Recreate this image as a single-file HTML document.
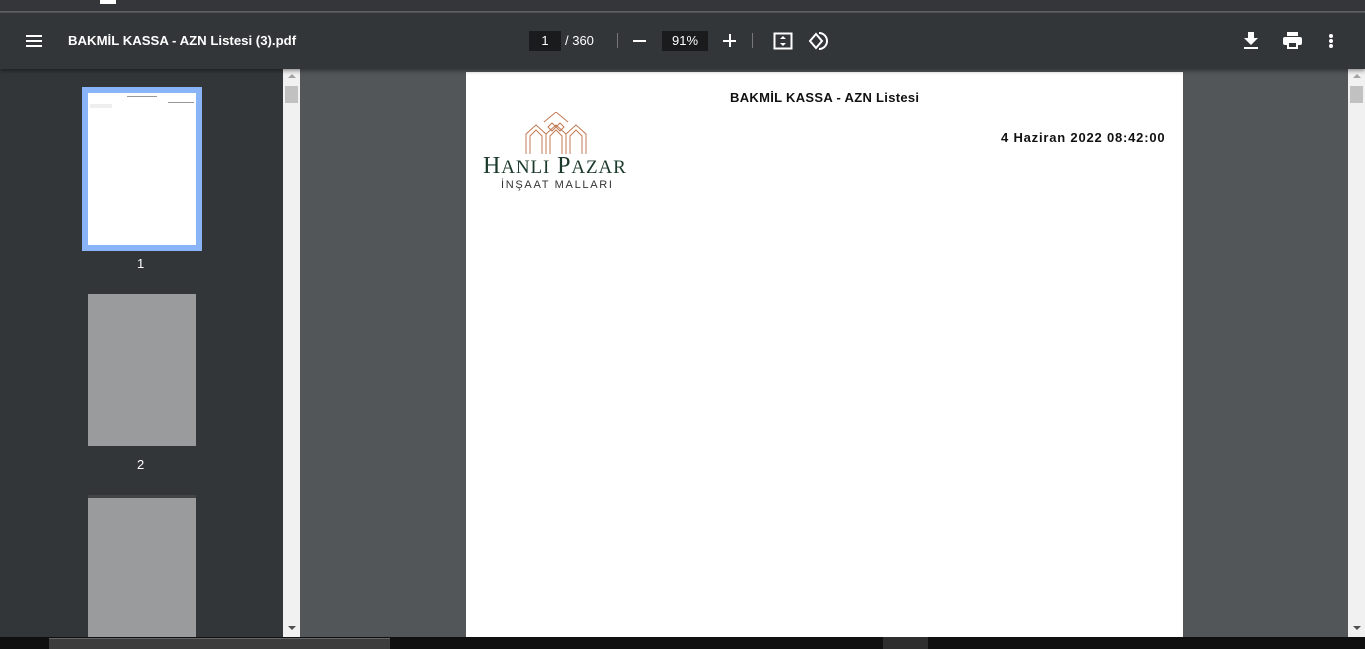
<!DOCTYPE html>
<html><head><meta charset="utf-8"><style>
*{margin:0;padding:0;box-sizing:border-box}
body{width:1365px;height:649px;overflow:hidden;background:#525659;font-family:"Liberation Sans","DejaVu Sans",sans-serif;position:relative}
.abs{position:absolute}
</style></head><body>
<div class="abs" style="left:0;top:0;width:1365px;height:12px;background:#35363a;border-bottom:1px solid #5f6266"></div>
<div class="abs" style="left:100px;top:0;width:16px;height:4px;background:#fff"></div>
<div class="abs" style="left:0;top:13px;width:1365px;height:56px;background:#323639;box-shadow:0 2px 4px rgba(0,0,0,.4);z-index:2"></div>
<div class="abs" style="left:26px;top:35px;width:16px;height:2px;background:#fff;z-index:3;box-shadow:0 5px 0 #fff,0 10px 0 #fff"></div>
<div class="abs" style="left:68px;top:33px;color:#fff;font-size:13.2px;font-weight:bold;z-index:3">BAKMİL KASSA - AZN Listesi (3).pdf</div>
<div class="abs" style="left:529px;top:31px;width:32px;height:20px;background:#191b1c;color:#fff;font-size:13px;text-align:center;line-height:20px;z-index:3">1</div>
<div class="abs" style="left:565px;top:33px;color:#fff;font-size:13px;z-index:3">/ 360</div>
<div class="abs" style="left:617px;top:33px;width:1px;height:15px;background:#777;z-index:3"></div>
<div class="abs" style="left:633px;top:40px;width:13px;height:2px;background:#fff;z-index:3"></div>
<div class="abs" style="left:662px;top:31px;width:46px;height:20px;background:#191b1c;color:#fff;font-size:13px;text-align:center;line-height:20px;z-index:3">91%</div>
<div class="abs" style="left:723px;top:40px;width:13px;height:2px;background:#fff;z-index:3"></div>
<div class="abs" style="left:729px;top:34px;width:2px;height:13px;background:#fff;z-index:3"></div>
<div class="abs" style="left:752px;top:33px;width:1px;height:15px;background:#777;z-index:3"></div>
<svg class="abs" style="left:773px;top:31px;z-index:3" width="20" height="20" viewBox="0 0 20 20"><rect x="1.5" y="2.5" width="17" height="15" fill="none" stroke="#fff" stroke-width="2"/><path d="M10 5l-3 3h6zM10 15l-3-3h6z" fill="#fff"/></svg>
<svg class="abs" style="left:808px;top:30px;z-index:3" width="22" height="22" viewBox="0 0 22 22"><path d="M8 4l-6 7 6 7 6-7z" fill="none" stroke="#fff" stroke-width="2"/><path d="M11 3a8 8 0 1 1 0 16" fill="none" stroke="#fff" stroke-width="2"/></svg>
<svg class="abs" style="left:1243px;top:32px;z-index:3" width="16" height="17" viewBox="0 0 16 17"><path d="M5 0h6v6h4l-7 7-7-7h4z" fill="#fff"/><rect x="1" y="15" width="14" height="2" fill="#fff"/></svg>
<svg class="abs" style="left:1283px;top:32px;z-index:3" width="19" height="17" viewBox="0 0 19 17"><rect x="4" y="0" width="11" height="4" fill="#fff"/><rect x="0" y="5" width="19" height="8" rx="2" fill="#fff"/><rect x="4" y="10" width="11" height="7" fill="#fff"/><rect x="6" y="11" width="7" height="4" fill="#323639"/></svg>
<div class="abs" style="left:1329px;top:34px;width:4px;height:4px;border-radius:2px;background:#fff;z-index:3;box-shadow:0 5px 0 #fff,0 10px 0 #fff"></div>
<div class="abs" style="left:0;top:69px;width:283px;height:568px;background:#323639"></div>
<div class="abs" style="left:82px;top:87px;width:120px;height:164px;background:#8ab4f8"></div>
<div class="abs" style="left:88px;top:93px;width:108px;height:152px;background:#fff"></div>
<div class="abs" style="left:127px;top:96px;width:30px;height:1px;background:#999"></div>
<div class="abs" style="left:168px;top:102px;width:26px;height:1px;background:#999"></div>
<div class="abs" style="left:90px;top:104px;width:22px;height:4px;background:#eee"></div>
<div class="abs" style="left:137px;top:256px;color:#fff;font-size:13px">1</div>
<div class="abs" style="left:88px;top:294px;width:108px;height:152px;background:#9a9b9c"></div>
<div class="abs" style="left:137px;top:457px;color:#fff;font-size:13px">2</div>
<div class="abs" style="left:88px;top:495px;width:108px;height:142px;background:#9a9b9c;border-top:3px solid #444"></div>
<div class="abs" style="left:283px;top:69px;width:17px;height:568px;background:#f1f1f1"></div>
<div class="abs" style="left:285px;top:86px;width:13px;height:17px;background:#c1c1c1"></div>
<div class="abs" style="left:288px;top:74px;border:4px solid transparent;border-bottom-color:#a3a3a3;border-top:0"></div>
<div class="abs" style="left:288px;top:626px;border:4px solid transparent;border-top-color:#505050;border-bottom:0"></div>
<div class="abs" style="left:466px;top:72px;width:717px;height:565px;background:#fff"></div>
<div class="abs" style="left:730px;top:90px;font-size:13px;font-weight:bold;color:#111;letter-spacing:0.3px;white-space:nowrap">BAKMİL KASSA - AZN Listesi</div>
<div class="abs" style="left:1001px;top:130px;font-size:13px;font-weight:bold;color:#111;letter-spacing:0.8px;white-space:nowrap">4 Haziran 2022 08:42:00</div>
<svg class="abs" style="left:524px;top:112px" width="64" height="42" viewBox="0 0 64 42"><g fill="none" stroke="#c07a55" stroke-width="1"><path d="M2 42V22l10-9 10 9v20M6 42V24l6-6 6 6v18M22 42V22l10-9 10 9v20M26 42V24l6-6 6 6v18M42 42V22l10-9 10 9v20M46 42V24l6-6 6 6v18"/><path d="M20 10l12-10 12 10M24 15l4-4 4 4-4 4zM32 15l4-4 4 4-4 4z"/></g></svg>
<div class="abs" style="left:483px;top:153px;font-family:'Liberation Serif',serif;font-size:24px;color:#1c3a2c;letter-spacing:.9px;white-space:nowrap">H<span style="font-size:19px">ANLI</span> P<span style="font-size:19px">AZAR</span></div>
<div class="abs" style="left:501px;top:179px;font-size:11px;color:#333;letter-spacing:1.7px">İNŞAAT MALLARI</div>
<div class="abs" style="left:1348px;top:69px;width:17px;height:568px;background:#f1f1f1"></div>
<div class="abs" style="left:1350px;top:86px;width:13px;height:17px;background:#c1c1c1"></div>
<div class="abs" style="left:1353px;top:74px;border:4px solid transparent;border-bottom-color:#a3a3a3;border-top:0"></div>
<div class="abs" style="left:1353px;top:626px;border:4px solid transparent;border-top-color:#505050;border-bottom:0"></div>
<div class="abs" style="left:0;top:637px;width:1365px;height:12px;background:#101010"></div>
<div class="abs" style="left:49px;top:638px;width:341px;height:11px;background:#3c3c3c;border-top:1px solid #666"></div>
<div class="abs" style="left:883px;top:637px;width:45px;height:12px;background:#2e2e2e"></div>
</body></html>
